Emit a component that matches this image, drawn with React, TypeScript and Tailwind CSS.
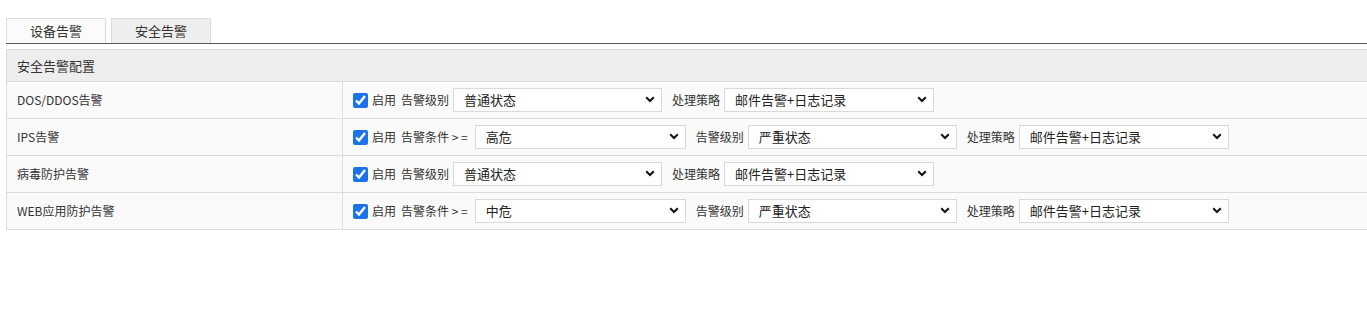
import { useState } from 'react'

const FONT = { fontFamily: '"Noto Sans CJK SC", "Liberation Sans", sans-serif' }

interface Opt {
  label: string
  value: string
  width: string
  options: string[]
}

interface RowDef {
  name: string
  fields: Opt[]
}

const levelOpts = ['普通状态', '严重状态', '紧急状态']
const strategyOpts = ['邮件告警+日志记录', '日志记录', '邮件告警']
const condOpts = ['低危', '中危', '高危']

const rows: RowDef[] = [
  {
    name: 'DOS/DDOS告警',
    fields: [
      { label: '告警级别', value: '普通状态', width: 'w-[209px]', options: levelOpts },
      { label: '处理策略', value: '邮件告警+日志记录', width: 'w-[210px]', options: strategyOpts },
    ],
  },
  {
    name: 'IPS告警',
    fields: [
      { label: '告警条件 > =', value: '高危', width: 'w-[211px]', options: condOpts },
      { label: '告警级别', value: '严重状态', width: 'w-[209px]', options: levelOpts },
      { label: '处理策略', value: '邮件告警+日志记录', width: 'w-[210px]', options: strategyOpts },
    ],
  },
  {
    name: '病毒防护告警',
    fields: [
      { label: '告警级别', value: '普通状态', width: 'w-[209px]', options: levelOpts },
      { label: '处理策略', value: '邮件告警+日志记录', width: 'w-[210px]', options: strategyOpts },
    ],
  },
  {
    name: 'WEB应用防护告警',
    fields: [
      { label: '告警条件 > =', value: '中危', width: 'w-[211px]', options: condOpts },
      { label: '告警级别', value: '严重状态', width: 'w-[209px]', options: levelOpts },
      { label: '处理策略', value: '邮件告警+日志记录', width: 'w-[210px]', options: strategyOpts },
    ],
  },
]

function Select({ field }: { field: Opt }) {
  const [v, setV] = useState(field.value)
  return (
    <div className={`relative ${field.width} h-[24px]`}>
      <select
        value={v}
        onChange={(e) => setV(e.target.value)}
        className="appearance-none w-full h-full bg-white border border-[#d9d9d9] pl-[10px] pr-6 text-[13px] text-[#222] outline-none"
        style={FONT}
      >
        {field.options.map((o) => (
          <option key={o} value={o}>
            {o}
          </option>
        ))}
      </select>
      <svg
        className="absolute right-[7px] top-[8px] pointer-events-none"
        width="10"
        height="7"
        viewBox="0 0 10 7"
      >
        <path d="M1.2 1.2 L5 5 L8.8 1.2" fill="none" stroke="#111" strokeWidth="2" />
      </svg>
    </div>
  )
}

export default function App() {
  const [enabled, setEnabled] = useState(rows.map(() => true))

  return (
    <div className="w-full h-[336px] bg-white text-[#333]" style={FONT}>
      {/* tabs */}
      <div className="pt-[18px] pl-[6px]">
        <div className="flex gap-[5px] border-b border-[#5a5a5a]">
          <div className="w-[100px] h-[25px] flex items-center justify-center border border-b-0 border-[#dcdcdc] bg-[#fbfbfb] text-[13px] text-[#333]">
            设备告警
          </div>
          <div className="w-[100px] h-[25px] flex items-center justify-center border border-b-0 border-[#dcdcdc] bg-[#eeeeee] text-[13px] text-[#333]">
            安全告警
          </div>
        </div>
      </div>

      {/* config table */}
      <div className="pl-[6px] pt-[5px]">
        <table className="w-full border-collapse text-[12px]">
          <tbody>
            <tr className="h-[32px] bg-[#ededed]">
              <td colSpan={2} className="border border-r-0 border-[#dddddd] pl-[10px] text-[13px] text-[#333]">
                安全告警配置
              </td>
            </tr>
            {rows.map((r, i) => (
              <tr key={r.name} className="h-[37px] bg-[#fafafa]">
                <td className="w-[336px] border border-[#dddddd] pl-[10px] text-[12px] text-[#333]">
                  {r.name}
                </td>
                <td className="border border-r-0 border-[#dddddd] pl-[10px]">
                  <div className="flex items-center">
                    <input
                      type="checkbox"
                      checked={enabled[i]}
                      onChange={(e) =>
                        setEnabled(enabled.map((x, j) => (j === i ? e.target.checked : x)))
                      }
                      className="w-[15px] h-[15px] m-0 accent-[#1a73e8]"
                    />
                    <span className="ml-[4px] text-[12px] text-[#333]">启用</span>
                    {r.fields.map((f, k) => (
                      <div key={k} className="flex items-center">
                        <span
                          className={`${k === 0 ? 'ml-[5px]' : 'ml-[10px]'} ${
                            f.label.includes('>') ? 'mr-[7px]' : 'mr-[4px]'
                          } text-[12px] text-[#333] whitespace-pre`}
                        >
                          {f.label}
                        </span>
                        <Select field={f} />
                      </div>
                    ))}
                  </div>
                </td>
              </tr>
            ))}
          </tbody>
        </table>
      </div>
    </div>
  )
}
